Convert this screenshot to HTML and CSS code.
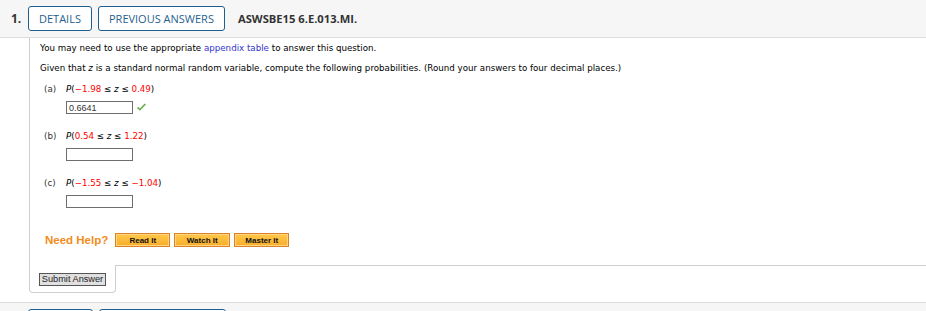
FILE: index.html
```html
<!DOCTYPE html>
<html lang="en">
<head>
  <meta charset="UTF-8">
  <title>Question 1</title>
  <link rel="stylesheet" href="styles.css">
</head>
<body>
  <div class="question">
    <div class="q-head">
      <span class="q-num">1.</span>
      <button class="head-btn">DETAILS</button>
      <button class="head-btn">PREVIOUS ANSWERS</button>
      <span class="q-code">ASWSBE15 6.E.013.MI.</span>
    </div>
    <div class="q-body">
      <div class="q-content">
        <p>You may need to use the appropriate <a href="#">appendix table</a> to answer this question.</p>
        <p class="lead">Given that <i>z</i> is a standard normal random variable, compute the following probabilities. (Round your answers to four decimal places.)</p>

        <div class="part">
          <div class="part-label"><span class="tag">(a)</span><span><i>P</i>(<span class="num">&minus;1.98</span> &le; <i>z</i> &le; <span class="num">0.49</span>)</span></div>
          <div class="answer">
            <input type="text" value="0.6641">
            <svg class="check" viewBox="0 0 12 10"><path d="M1 5.5 L4.2 8.6 L11 1.6 L9.6 0.6 L4.2 6 L2.3 4.1 Z"/></svg>
          </div>
        </div>

        <div class="part">
          <div class="part-label"><span class="tag">(b)</span><span><i>P</i>(<span class="num">0.54</span> &le; <i>z</i> &le; <span class="num">1.22</span>)</span></div>
          <div class="answer"><input type="text"></div>
        </div>

        <div class="part">
          <div class="part-label"><span class="tag">(c)</span><span><i>P</i>(<span class="num">&minus;1.55</span> &le; <i>z</i> &le; <span class="num">&minus;1.04</span>)</span></div>
          <div class="answer"><input type="text"></div>
        </div>

        <div class="help">
          <span class="help-title">Need Help?</span>
          <button class="help-btn">Read It</button>
          <button class="help-btn">Watch It</button>
          <button class="help-btn">Master It</button>
        </div>
      </div>
      <div class="q-foot">
        <div class="submit-tab"><button class="submit-btn">Submit Answer</button></div>
        <div class="foot-rest"></div>
      </div>
    </div>
  </div>

  <!-- next question, only its top edge is visible -->
  <div class="question next">
    <div class="q-head">
      <span class="q-num"></span>
      <span class="head-btn stub-details"></span>
      <span class="head-btn stub-prev"></span>
    </div>
  </div>
</body>
</html>
```

FILE: styles.css
```css
* { box-sizing: border-box; margin: 0; padding: 0; }
html, body { height: 100%; overflow: hidden; }
body {
  background-color: #fff;
  font-family: "DejaVu Sans", Verdana, sans-serif;
  color: #000;
}

/* Header band */
.q-head {
  display: flex;
  align-items: center;
  height: 38px;
  padding: 0 0 1px 11px;
  background-color: #f6f6f6;
  border-bottom: 1px solid #dcdcdc;
  font-family: "Open Sans", sans-serif;
}
.q-num {
  width: 17px;
  font-size: 12px;
  font-weight: bold;
  color: #333;
}
.head-btn {
  height: 25px;
  padding: 0 10px;
  margin-right: 6px;
  border: 1px solid #1f5f8f;
  border-radius: 3px;
  background-color: #fff;
  color: #1f5f8f;
  font-family: "Open Sans", sans-serif;
  font-size: 11px;
}
.q-code {
  margin-left: 7px;
  font-size: 11.2px;
  font-weight: bold;
  color: #333;
}
.next { background-color: #f6f6f6; }
.next .q-head { border-top: 1px solid #dcdcdc; align-items: flex-start; padding-top: 6px; }
.stub-details { width: 65px; }
.stub-prev { width: 127px; }

/* Body */
.q-body {
  margin-left: 29px;
  padding-bottom: 9px;
}
.q-content {
  border-left: 1px solid #cfcfcf;
  padding: 3px 0 18px 10px;
  font-size: 8.7px;
  line-height: 14px;
}
.q-content p.lead { margin-top: 6px; }
.q-content a { color: #3333cc; text-decoration: none; }

.part { margin-top: 7px; margin-left: 4px; }
.part + .part { margin-top: 15px; }
.part-label { display: flex; }
.tag { width: 22px; color: #333; }
.num { color: #f00; }
.answer {
  display: flex;
  align-items: center;
  gap: 3px;
  margin: 5px 0 0 22px;
}
.answer input {
  width: 67px;
  height: 13px;
  padding: 0 2px;
  border: 1px solid #6e6e6e;
  font-family: "Liberation Sans", Arial, sans-serif;
  font-size: 9px;
  color: #333;
  outline: none;
}
.check { width: 11px; height: 9px; fill: #6aae4c; }

.help {
  display: flex;
  align-items: center;
  gap: 4px;
  margin-top: 25px;
  margin-left: 5px;
}
.help-title {
  margin-right: 3px;
  font-family: "Liberation Sans", Arial, sans-serif;
  font-size: 11.5px;
  font-weight: bold;
  color: #f28c1c;
}
.help-btn {
  width: 55px;
  height: 14px;
  border: 1px solid #d9822b;
  box-shadow: inset 0 0 0 1px #ffd57e;
  background: linear-gradient(#ffc84a, #f8ad2c);
  font-family: "Liberation Sans", Arial, sans-serif;
  font-size: 8px;
  font-weight: bold;
  color: #111;
}
.help-btn:nth-of-type(2) { width: 56px; }

/* Footer tab with submit button */
.q-foot { display: flex; }
.submit-tab {
  display: flex;
  align-items: flex-start;
  height: 28px;
  padding: 8px 9px 0 9px;
  border: 1px solid #cfcfcf;
  border-top: none;
  border-radius: 0 0 4px 4px;
}
.submit-btn {
  width: 67px;
  height: 13px;
  padding: 0;
  border: 1px solid #555;
  background-color: #e0e0e0;
  font-family: "Liberation Sans", Arial, sans-serif;
  font-size: 9.2px;
  line-height: 11px;
  white-space: nowrap;
  color: #222;
}
.foot-rest {
  flex: 1;
  border-top: 1px solid #cfcfcf;
  margin-left: -1px;
}
```
